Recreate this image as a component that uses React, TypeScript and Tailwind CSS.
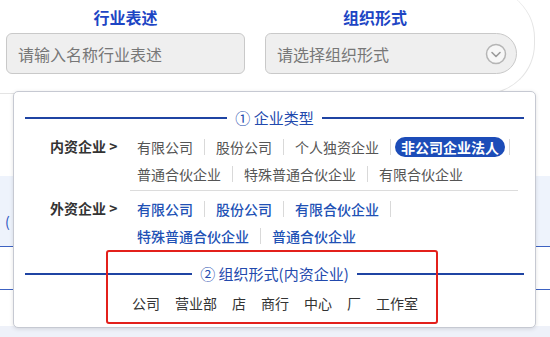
import React from "react";

type Group = {
  label: string;
  lines: string[][];
  active?: string;
  blue?: boolean;
};

const domestic: Group = {
  label: "内资企业 >",
  lines: [
    ["有限公司", "股份公司", "个人独资企业", "非公司企业法人"],
    ["普通合伙企业", "特殊普通合伙企业", "有限合伙企业"],
  ],
  active: "非公司企业法人",
};

const foreign: Group = {
  label: "外资企业 >",
  lines: [
    ["有限公司", "股份公司", "有限合伙企业"],
    ["特殊普通合伙企业", "普通合伙企业"],
  ],
  blue: true,
};

const forms = ["公司", "营业部", "店", "商行", "中心", "厂", "工作室"];

export default function App() {
  return (
    <div className="relative w-[550px] h-[337px] overflow-hidden bg-white font-['Noto_Sans_CJK_SC','Noto_Sans',sans-serif]">
      {/* top search card */}
      <div className="-mt-[12px] w-[535px] h-[106px] bg-white border-r border-b border-[#e4e4e4] rounded-r-[50px] pt-[17px] flex">
        <div className="ml-[6px] w-[239px] flex flex-col">
          <div className="h-[24px] leading-[24px] text-center text-[16px] font-bold text-[#1d45c4]">
            行业表述
          </div>
          <div className="mt-[4px] h-[41px] rounded-[6px] border border-[#c9c9c9] bg-[#efefef] flex items-center pl-[11px] text-[16px] text-[#777]">
            请输入名称行业表述
          </div>
        </div>
        <div className="ml-[20px] w-[252px] flex flex-col">
          <div className="w-[220px] h-[24px] leading-[24px] text-center text-[16px] font-bold text-[#1d45c4]">
            组织形式
          </div>
          <div className="mt-[4px] h-[41px] rounded-l-[6px] rounded-r-[21px] border border-[#c9c9c9] bg-[#efefef] flex items-center justify-between pl-[11px] pr-[9px] text-[16px] text-[#777]">
            请选择组织形式
            <svg width="22" height="22" viewBox="0 0 22 22">
              <circle cx="11" cy="11" r="9.5" fill="#f7f7f7" stroke="#b5b5b5" strokeWidth="1.5" />
              <path d="M7 9.5 L11 13.5 L15 9.5" fill="none" stroke="#9a9a9a" strokeWidth="1.6" strokeLinecap="round" strokeLinejoin="round" />
            </svg>
          </div>
        </div>
      </div>

      {/* page rows behind the popover */}
      <div className="h-[82px]" />
      <div className="h-[71px] bg-[#eef3fc] border-b border-[#3d62c2] pt-[35px] pl-[5px] text-[14px] leading-[20px] text-[#2a55c0]">
        (
      </div>
      <div className="h-[43px] border-b border-[#3d62c2]" />
      <div className="h-[36px]" />
      <div className="h-[20px] bg-[#eef1f9]" />

      {/* dropdown popover */}
      <div className="absolute left-[13px] top-[91px] w-[523px] h-[237px] bg-white border border-[#c6c9d2] rounded-[5px] shadow-[0_1px_4px_rgba(0,0,0,0.12)] pt-[16px] px-[11px]">
        <Title text="① 企业类型" />
        <div className="mt-[5px]">
          <OptionGroup group={domestic} bordered />
        </div>
        <div className="mt-[4px]">
          <OptionGroup group={foreign} />
        </div>
        <div className="mt-[15px]">
          <Title text="② 组织形式(内资企业)" />
        </div>
        <div className="mt-[9px] ml-[107px] h-[20px] flex items-center gap-[15px] text-[14px] leading-[20px] text-[#333]">
          {forms.map((f) => (
            <span key={f}>{f}</span>
          ))}
        </div>

        {/* red highlight box */}
        <div className="absolute left-[92px] top-[158px] w-[332px] h-[74px] border-2 border-[#e3201b] rounded-[3px]" />
      </div>
    </div>
  );
}

function Title({ text }: { text: string }) {
  return (
    <div className="h-[20px] flex items-center">
      <div className="flex-1 h-[1.5px] bg-[#1f44a3]" />
      <span className="mx-[8px] text-[15px] leading-[20px] text-[#2249ad]">{text}</span>
      <div className="flex-1 h-[1.5px] bg-[#1f44a3]" />
    </div>
  );
}

function OptionGroup({ group, bordered }: { group: Group; bordered?: boolean }) {
  const total = group.lines.reduce((n, l) => n + l.length, 0);
  let idx = 0;
  return (
    <div className="flex items-start">
      <div className="w-[105px] pl-[25px] h-[27px] leading-[27px] text-[14px] font-bold text-[#333]">
        {group.label}
      </div>
      <div className={"w-[388px] " + (bordered ? "pb-[3px] border-b border-[#dcdcdc]" : "")}>
        {group.lines.map((line, li) => (
          <div key={li} className="h-[27px] flex items-center">
            {line.map((item) => {
              idx++;
              const last = idx === total;
              const active = item === group.active;
              return (
                <React.Fragment key={item}>
                  {active ? (
                    <span className="h-[20px] leading-[20px] px-[6px] rounded-full bg-[#1c4cb8] text-white text-[14px] font-bold">
                      {item}
                    </span>
                  ) : (
                    <span
                      className={
                        "px-[7px] text-[14px] leading-[20px] " +
                        (group.blue ? "text-[#2151b5] font-medium" : "text-[#555]")
                      }
                    >
                      {item}
                    </span>
                  )}
                  {!last && <span className="mx-[4px] w-px h-[16px] bg-[#d9d9d9]" />}
                </React.Fragment>
              );
            })}
          </div>
        ))}
      </div>
    </div>
  );
}
